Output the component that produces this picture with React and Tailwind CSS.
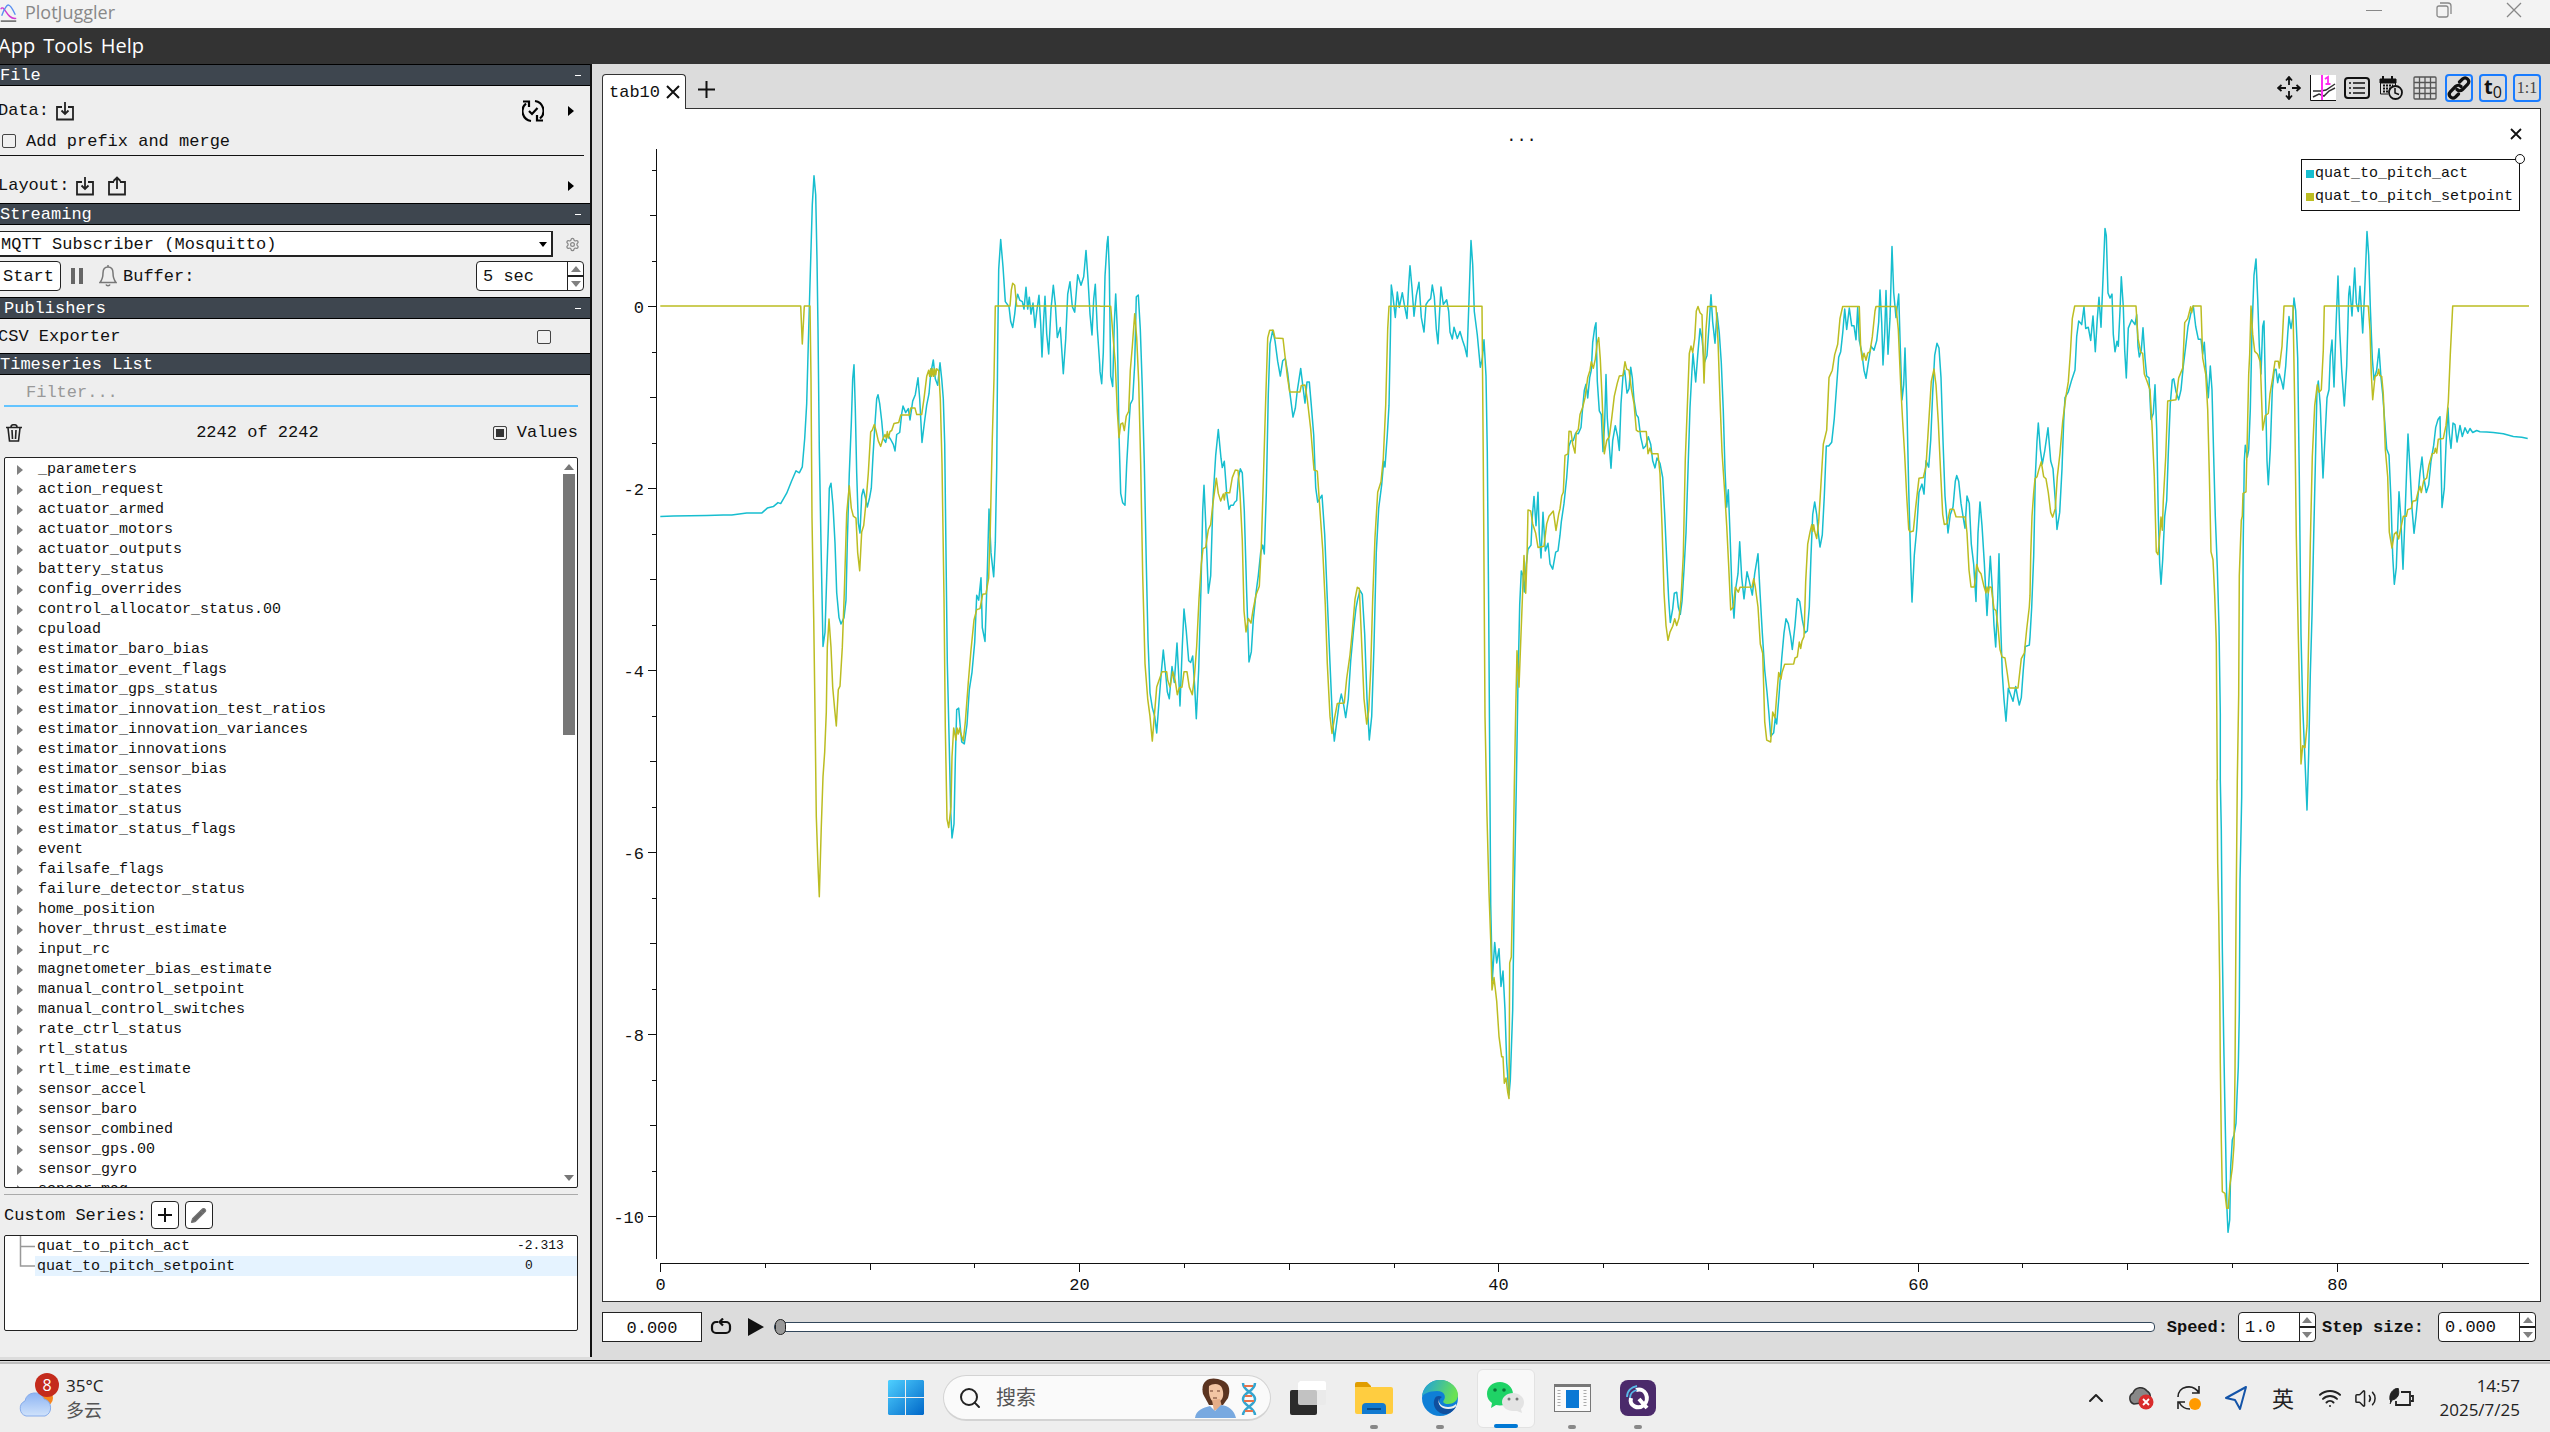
import React, { useState } from 'react';
import { Search, Settings, Wifi, Volume2, Pencil, ChevronUp } from 'lucide-react';

const MONO = "font-['Liberation_Mono','Noto_Sans_CJK_SC',monospace]";
const SANS = "font-['Open_Sans','Noto_Sans_CJK_SC',sans-serif]";

const TOPICS = [
  '_parameters', 'action_request', 'actuator_armed', 'actuator_motors', 'actuator_outputs',
  'battery_status', 'config_overrides', 'control_allocator_status.00', 'cpuload',
  'estimator_baro_bias', 'estimator_event_flags', 'estimator_gps_status',
  'estimator_innovation_test_ratios', 'estimator_innovation_variances', 'estimator_innovations',
  'estimator_sensor_bias', 'estimator_states', 'estimator_status', 'estimator_status_flags',
  'event', 'failsafe_flags', 'failure_detector_status', 'home_position', 'hover_thrust_estimate',
  'input_rc', 'magnetometer_bias_estimate', 'manual_control_setpoint', 'manual_control_switches',
  'rate_ctrl_status', 'rtl_status', 'rtl_time_estimate', 'sensor_accel', 'sensor_baro',
  'sensor_combined', 'sensor_gps.00', 'sensor_gyro', 'sensor_mag',
];

// Samples are stored per block, as integers on the grid of that block
const GRIDS = {
  a: { x: 640, y: 130, sx: 3, sy: 2.01 },
  b: { x: 1100, y: 200, sx: 3, sy: 1.704 },
  c: { x: 1560, y: 200, sx: 3, sy: 2.703 },
  d: { x: 2030, y: 200, sx: 3, sy: 2.529 },
  e: { x: 2190, y: 780, sx: 3, sy: 3 },
};

const PITCH_ACT = [
  ['a', '61,777 100,776 200,775 250,774 275,774 320,770 365,770 382,760 400,757 414,749 422,751 440,730 455,705 468,685 478,689 487,677 494,620 500,550 505,430 509,330 513,240 517,150 522,92 527,130 531,260 534,400 538,640 543,830 549,1038 555,1010 560,900 565,800 568,720 573,710 579,755 585,830 590,930 597,980 603,993 612,980 618,945 622,830 628,690 634,590 638,500 642,472 646,560 650,690 655,790 660,810 665,735 670,722 676,738 682,758 689,738 694,720 699,655 705,590 710,540 714,532 719,550 725,585 730,620 737,628 742,612 752,622 760,632 765,645 770,612 779,608 785,570 789,555 797,568 805,560 810,583 818,545 826,532 834,498 839,540 846,628 853,590 860,553 867,530 872,490 880,462 886,500 893,513 900,468 905,500 910,540 914,630 918,850 922,1070 928,1240 932,1370 936,1423 942,1395 946,1270 950,1165 956,1162 961,1200 965,1230 973,1234 981,1195 988,1125 996,1090 1004,1030 1010,935 1016,945 1023,900 1027,1000 1035,1028 1041,910 1047,762 1053,850 1061,898 1066,830 1070,680 1073,430 1076,280 1082,220 1089,275 1096,345 1107,355 1112,385 1118,397 1124,370 1128,345 1133,330 1139,342 1147,345 1152,360 1158,316 1163,360 1168,336 1173,370 1179,348 1185,397 1190,365 1197,332 1202,390 1206,456 1211,380 1215,334 1220,410 1226,450 1233,360 1240,312 1246,350 1252,417 1261,397 1270,490 1277,420 1283,330 1290,305 1297,355 1304,366 1313,291 1323,312 1331,295 1338,242 1344,300 1350,370 1356,412 1361,340 1366,310 1372,400 1379,470'],
  ['b', '0,292 5,313 10,260 15,130 21,75 24,62 28,120 32,300 38,318 43,210 47,160 52,220 57,400 62,500 68,516 75,520 80,450 86,390 91,348 98,340 104,280 109,165 115,162 121,220 127,320 133,450 139,620 144,750 150,840 157,865 164,880 170,908 177,855 184,805 190,767 196,800 202,838 208,850 216,795 223,822 231,755 236,810 240,862 247,760 252,697 259,735 266,785 272,788 278,777 284,830 289,884 296,800 303,660 308,530 312,486 317,550 325,670 332,640 339,510 347,435 355,391 363,440 367,456 373,445 380,500 387,527 392,520 400,520 404,515 410,512 415,475 421,458 427,465 433,530 440,670 447,787 454,770 460,715 468,670 475,640 482,600 488,588 493,603 499,500 505,330 510,245 518,222 525,240 533,275 541,300 548,274 556,270 563,295 570,330 579,370 586,355 592,325 602,287 608,315 615,346 621,310 628,310 634,350 641,400 647,490 653,515 666,503 674,570 682,680 690,790 697,880 703,922 710,890 717,860 724,842 730,857 737,882 745,850 752,785 761,730 768,695 773,680 780,665 787,672 794,740 801,850 808,920 815,880 822,760 829,600 836,525 845,485 851,445 855,455 862,400 867,350 871,240 874,145 879,165 886,200 892,157 898,183 907,158 913,178 921,202 926,145 930,112 936,150 942,198 949,163 957,140 964,200 972,225 978,178 985,172 992,168 997,145 1003,165 1009,220 1014,245 1018,200 1023,148 1030,178 1040,170 1046,190 1050,225 1057,237 1062,217 1072,236 1080,224 1088,240 1094,250 1101,267 1107,170 1113,69 1118,110 1123,190 1132,230 1141,285 1147,270 1152,238 1158,300 1162,430 1166,700 1169,950 1172,1200 1177,1330 1184,1265 1190,1300 1197,1276 1203,1340 1209,1314 1215,1380 1220,1470 1227,1525 1231,1500 1238,1380 1243,1180 1249,1000 1254,820 1259,690 1264,632 1269,640 1273,668 1279,620 1284,595 1293,588 1297,540 1302,505 1308,555 1314,498 1318,570 1323,610 1329,532 1336,598 1344,585 1350,620 1358,629 1367,600 1374,598'],
  ['c', '0,906 4,870 12,820 20,750 27,665 33,650 40,650 47,630 55,632 63,615 68,560 73,515 78,498 83,535 89,480 94,460 98,385 104,345 108,332 112,490 118,570 124,580 129,680 134,600 138,472 142,590 148,665 153,725 158,650 166,610 173,640 178,677 183,550 189,475 194,460 201,522 207,510 212,452 217,480 222,540 229,580 235,588 242,640 250,672 257,665 265,640 272,660 278,705 285,724 291,697 300,712 308,750 314,850 320,970 326,1080 331,1142 338,1105 343,1063 350,1060 355,1100 361,1120 366,1085 372,1000 378,900 384,730 390,560 396,460 399,415 407,492 413,420 420,348 426,375 433,440 441,420 448,330 453,256 458,330 465,387 471,305 478,360 484,440 490,570 495,730 500,830 505,783 510,900 516,1060 522,1130 527,1050 534,1010 539,924 545,1020 552,1078 561,1005 568,1030 577,1068 584,1010 594,956 600,1060 607,1170 614,1270 621,1330 627,1390 632,1450 641,1440 646,1400 650,1416 657,1340 665,1240 672,1170 678,1132 685,1145 692,1180 697,1215 705,1150 712,1077 719,1085 727,1135 735,1170 742,1165 748,1100 753,960 758,850 764,816 770,850 775,900 780,938 787,905 793,800 799,665 806,665 815,655 823,590 830,500 836,425 842,410 848,360 854,295 860,350 868,292 875,340 882,340 888,378 893,290 898,380 905,410 912,460 918,482 925,440 933,395 942,406 950,380 956,330 960,243 965,330 969,446 974,360 978,245 984,417 990,320 996,126 1001,250 1008,318 1016,254 1021,400 1026,540 1031,500 1035,400 1041,570 1046,780 1052,980 1056,1087 1063,960 1070,890 1077,790 1086,768 1092,795 1098,705 1106,722 1112,650 1118,520 1124,420 1131,387 1137,400 1143,480 1149,650 1155,800 1164,900 1171,850 1179,830 1186,760 1190,745 1196,760 1203,820 1210,860 1215,887 1221,800 1228,820 1234,930 1241,985 1248,1085 1254,900 1260,816 1266,880 1273,980 1281,1123 1286,1040 1291,963 1297,1050 1302,1150 1307,1208 1313,1080 1317,956 1322,1150 1327,1280 1332,1350 1338,1409 1345,1320 1352,1338 1359,1355 1367,1315 1373,1345 1378,1365 1384,1345 1390,1270 1396,1207 1408,1203'],
  ['d', '0,1105 5,1030 11,900 16,700 21,610 25,564 31,630 37,668 44,635 54,576 62,660 69,680 76,760 81,833 89,790 96,680 101,560 105,500 115,485 125,455 135,430 140,345 146,306 155,315 162,270 167,325 175,322 182,355 189,293 196,384 202,300 207,246 213,322 219,200 225,72 229,90 234,235 240,248 246,238 250,340 255,384 261,357 265,370 270,280 274,194 280,270 284,380 289,450 295,324 305,303 315,315 320,290 324,370 328,397 334,380 339,323 345,400 350,445 357,450 363,555 370,540 375,467 380,580 385,800 389,920 393,972 398,910 404,800 410,760 415,640 421,515 427,455 431,452 438,485 446,505 453,480 460,420 467,370 474,320 483,285 490,268 497,320 505,352 513,352 518,390 523,360 528,430 535,500 541,420 546,480 551,650 556,800 562,930 567,1080 571,1300'],
  ['e', '91,0 94,150 97,500 101,780 104,950 107,1100 109,1200 111,1290 114,1357 119,1320 122,1160 127,1080 132,1065 138,1030 141,950 145,860 148,700 150,300 152,200 155,50'],
  ['d', '637,1200 640,850 643,660 646,620 652,650 656,632 661,530 666,330 672,190 678,149 683,250 688,370 693,440 698,320 702,306 706,460 711,660 715,720 721,630 727,480 733,430 738,428 743,462 748,440 755,460 760,478 767,420 773,340 777,295 783,325 788,300 792,248 797,280 803,400 808,700 813,1100 818,1280 824,1400 831,1543 836,1400 841,1200 846,1050 851,850 857,630 861,480 865,458 871,520 879,703 885,600 891,500 897,480 901,395 906,354 912,473 918,320 924,192 929,330 935,430 943,521 950,420 956,240 959,218 966,293 974,172 979,260 985,282 990,218 998,336 1004,230 1011,80 1016,140 1021,270 1027,400 1032,455 1040,430 1047,376 1053,450 1058,490 1064,560 1070,630 1077,645 1083,760 1088,900 1093,972 1099,930 1103,830 1107,738 1112,800 1119,934 1125,800 1130,680 1134,592 1140,680 1146,780 1152,843 1158,800 1165,740 1170,690 1176,650 1181,700 1189,740 1196,720 1203,660 1211,620 1217,575 1224,555 1230,548 1236,778 1243,730 1248,620 1254,526 1258,590 1263,628 1269,564 1275,568 1281,612 1290,570 1297,598 1305,576 1313,590 1320,578 1328,588 1340,583 1350,586 1370,587 1390,588 1420,591 1450,598 1475,600 1493,603'],
];

const PITCH_SETPOINT = [
  ['a', '61,354 482,354 487,430 493,354 510,354 513,500 516,780 521,980 525,1170 529,1380 534,1480 538,1541 544,1400 549,1300 554,1250 559,1170 562,1040 567,983 573,1040 578,1120 584,1165 589,1198 595,1125 600,1118 607,1040 613,930 620,770 628,715 634,760 640,776 648,780 653,850 659,886 665,808 671,795 677,755 685,690 692,607 697,603 703,592 708,604 715,625 722,636 728,622 735,612 739,619 742,606 745,619 750,606 755,604 762,590 776,588 782,573 808,573 812,559 825,559 830,572 845,572 852,540 860,495 866,483 869,495 872,480 875,495 878,480 881,495 884,480 887,492 890,480 896,484 901,540 906,670 912,940 916,1200 921,1385 926,1402 933,1360 936,1260 941,1202 948,1226 951,1202 955,1214 959,1202 961,1210 970,1228 976,1190 985,1110 993,1045 1002,985 1010,964 1020,962 1028,933 1038,932 1046,900 1051,800 1057,620 1062,500 1066,354 1110,354 1114,322 1118,308 1124,312 1130,354 1380,354'],
  ['b', '0,181 32,181 38,225 46,280 52,360 57,405 62,382 68,380 73,393 79,368 86,360 91,290 97,250 104,194 110,235 116,310 122,450 128,640 135,790 143,850 150,880 157,922 163,880 170,830 178,817 186,804 200,804 203,818 210,830 218,804 226,820 232,843 238,831 246,830 252,804 261,804 268,830 277,843 283,815 290,760 297,680 304,620 309,594 317,592 325,562 332,553 338,520 344,495 349,474 355,500 362,513 370,501 373,511 376,499 389,499 397,473 406,460 414,461 420,500 427,580 432,700 438,736 445,713 453,721 459,699 468,673 478,658 484,590 490,480 497,340 503,235 509,222 520,222 525,235 549,236 556,270 562,300 569,327 600,327 604,316 615,315 622,340 632,390 642,460 652,462 660,530 668,595 676,690 682,790 690,880 696,909 703,885 712,858 733,857 740,815 750,775 757,735 765,680 772,660 778,662 784,740 792,850 800,893 806,870 812,800 818,680 825,575 833,498 843,480 850,440 857,350 863,220 867,181 1146,181 1150,450 1155,880 1161,1050 1167,1180 1172,1260 1176,1346 1182,1325 1190,1365 1197,1425 1205,1460 1209,1460 1213,1505 1218,1496 1223,1520 1227,1531 1229,1300 1234,1290 1239,1150 1243,1000 1247,870 1251,768 1257,830 1263,740 1268,665 1272,606 1277,670 1281,610 1284,528 1292,530 1298,552 1307,568 1314,592 1332,590 1340,552 1347,539 1360,530 1368,563 1376,535'],
  ['c', '0,835 5,800 10,790 15,690 24,686 27,625 33,626 38,660 45,684 49,628 55,620 60,580 68,560 75,535 83,480 90,460 94,437 100,455 106,430 112,385 116,372 121,430 126,530 133,686 140,650 148,640 155,590 163,530 172,495 178,476 189,474 195,437 200,457 207,460 214,510 222,550 229,622 235,626 259,626 264,686 270,670 275,686 294,686 300,740 306,880 312,1060 318,1150 324,1190 330,1168 338,1152 344,1132 350,1150 357,1130 363,1080 370,960 376,700 382,560 388,415 393,395 398,412 404,375 409,300 414,288 420,305 426,310 432,495 438,350 443,288 468,288 474,380 480,540 486,680 494,790 500,880 506,990 512,1108 520,1100 526,1047 535,1060 540,1047 576,1046 581,1024 586,1046 594,1100 601,1200 608,1225 614,1410 620,1460 632,1465 638,1384 645,1400 650,1340 656,1277 663,1295 666,1277 674,1255 701,1254 705,1238 712,1235 718,1195 722,1212 726,1192 732,1180 737,1030 743,930 750,898 755,878 758,896 761,878 764,896 770,915 776,870 782,780 790,660 800,622 807,480 817,460 824,418 833,390 840,320 848,288 898,288 902,400 907,433 912,414 918,433 923,414 930,410 937,370 945,300 948,288 1008,288 1015,350 1022,500 1028,600 1034,690 1040,800 1046,890 1050,897 1060,895 1067,830 1077,752 1090,750 1098,720 1105,620 1114,490 1122,457 1128,500 1135,600 1142,740 1148,850 1153,877 1161,875 1170,836 1181,836 1188,856 1216,857 1221,900 1227,1000 1233,1046 1243,1046 1250,985 1256,1002 1263,1010 1272,1045 1278,1062 1281,1046 1285,1062 1288,1046 1294,1047 1302,1105 1308,1110 1314,1155 1320,1215 1326,1235 1335,1238 1342,1280 1348,1319 1374,1319 1384,1240 1393,1225 1400,1160 1408,1100'],
  ['d', '0,1000 2,900 6,800 11,740 15,705 21,700 26,683 34,662 41,700 48,705 55,740 62,790 68,802 76,780 82,700 90,640 98,560 107,500 115,460 121,390 127,300 134,268 318,268 324,350 332,385 338,388 343,440 352,460 360,480 366,570 373,700 379,890 384,897 390,840 393,802 397,835 400,760 407,650 413,508 438,505 446,450 458,425 464,310 473,300 482,270 485,285 489,268 513,268 518,400 527,440 533,530 538,690 543,890 549,910 554,1000 559,1120 562,1467'],
  ['e', '81,0 83,250 86,400 89,600 91,850 94,1080 97,1235 105,1240 110,1285 115,1285 119,1220 127,1165 132,1095 135,880 138,420 140,200 142,0'],
  ['d', '626,1250 628,950 634,810 637,800 639,742 648,738 652,600 656,440 659,390 663,268 668,340 674,383 683,390 691,410 698,582 706,545 715,540 720,490 728,450 735,408 745,408 748,425 756,370 762,268 789,268 794,520 799,850 805,1100 810,1290 813,1426 818,1380 825,1385 831,1330 836,1100 841,870 847,650 854,520 862,467 867,486 874,480 880,380 883,268 1015,268 1020,330 1024,440 1028,505 1035,447 1042,443 1046,428 1049,444 1055,446 1060,490 1066,630 1073,700 1078,840 1086,880 1093,845 1099,840 1106,857 1110,840 1120,800 1129,800 1133,783 1144,780 1148,762 1158,760 1163,742 1170,724 1174,740 1181,710 1190,703 1197,670 1206,642 1213,640 1216,628 1220,640 1225,605 1240,603 1248,570 1255,510 1261,390 1268,268 1497,268'],
];

const toPolyline = (blocks) =>
  blocks
    .flatMap(([grid, samples]) => {
      const g = GRIDS[grid];
      return samples.split(' ').map((pair) => {
        const [x, y] = pair.split(',').map(Number);
        return `${(g.x + x / g.sx).toFixed(1)},${(g.y + y / g.sy).toFixed(1)}`;
      });
    })
    .join(' ');

const timeToX = (t) => Math.round(660 + t * 20.96) + 0.5;
const valueToY = (v) => Math.round(306 - v * 91) + 0.5;

const range = (from, to, step) => {
  const out = [];
  for (let v = from; v <= to; v += step) out.push(v);
  return out;
};

const PlotCanvas = () => (
  <svg
    viewBox="603 109 1937 1192"
    preserveAspectRatio="none"
    className="block w-full h-full"
    role="img"
    aria-label="quat_to_pitch_act and quat_to_pitch_setpoint over time"
  >
    <g stroke="#111" strokeWidth="1" shapeRendering="crispEdges">
      <line x1="656.5" y1="149" x2="656.5" y2="1259" />
      <line x1="660" y1="1263.5" x2="2529" y2="1263.5" />
      {range(-10, 1.5, 0.5).map((v) => {
        const len = v % 2 === 0 ? 8 : v % 1 === 0 ? 6 : 4;
        return <line key={v} x1={656 - len} x2="656" y1={valueToY(v)} y2={valueToY(v)} />;
      })}
      {range(0, 85, 5).map((t) => {
        const len = t % 20 === 0 ? 8 : t % 10 === 0 ? 6 : 4;
        return <line key={t} x1={timeToX(t)} x2={timeToX(t)} y1="1264" y2={1264 + len} />;
      })}
    </g>
    <g className={`${MONO} text-[17px]`} fill="#111">
      {range(-10, 0, 2).map((v) => (
        <text key={v} x="644" y={valueToY(v) + 6} textAnchor="end">{v}</text>
      ))}
      {range(0, 80, 20).map((t) => (
        <text key={t} x={timeToX(t)} y="1290" textAnchor="middle">{t}</text>
      ))}
    </g>
    <g fill="none" strokeWidth="1.5" strokeLinejoin="round">
      <polyline points={toPolyline(PITCH_ACT)} stroke="#17becf" />
      <polyline points={toPolyline(PITCH_SETPOINT)} stroke="#bcbd22" />
    </g>
  </svg>
);

const SectionHeader = ({ title, collapsible = true, indent = false }) => (
  <div className="flex h-[22px] shrink-0 items-center justify-between border-y border-black bg-[#3e464f] pr-1.5 text-white">
    <h2 className={indent ? 'pl-1 pt-0.5' : 'pt-0.5'}>{title}</h2>
    {collapsible && (
      <button aria-label={`Collapse ${title}`} className="flex h-4 w-3 items-center justify-center">
        <span className="h-px w-1.5 bg-white" />
      </button>
    )}
  </div>
);

const BoxArrow = ({ up = false }) => (
  <svg width="20" height="20" viewBox="0 0 20 20" fill="none" stroke="#222" strokeWidth="1.8">
    <path d="M7 6H2v12.5h16V6h-5" />
    {up ? <path d="M10 13V2M6.5 5L10 1.5 13.5 5" /> : <path d="M10 1v12M6.5 9.5L10 13l3.5-3.5" />}
  </svg>
);

const Arrow = ({ color = '#000' }) => (
  <svg width="6" height="10" viewBox="0 0 6 10">
    <path d="M0 0l6 5-6 5z" fill={color} />
  </svg>
);

const Spinner = ({ label, value, className }) => {
  const [text, setText] = useState(value);
  return (
    <div className={`flex h-[30px] shrink-0 overflow-hidden rounded-sm border border-[#222] bg-white ${className}`}>
      <input
        aria-label={label}
        value={text}
        onChange={(e) => setText(e.target.value)}
        className="min-w-0 flex-1 bg-transparent pl-1.5 pt-0.5 outline-none"
      />
      <div className="flex w-4 flex-col border-l border-[#222]">
        <button aria-label={`${label} up`} className="flex flex-1 items-center justify-center border-b border-[#222]">
          <svg width="10" height="6" viewBox="0 0 10 6"><path d="M0 6l5-6 5 6z" fill="#808080" /></svg>
        </button>
        <button aria-label={`${label} down`} className="flex flex-1 items-center justify-center border-t border-[#222]">
          <svg width="10" height="6" viewBox="0 0 10 6"><path d="M0 0l5 6 5-6z" fill="#808080" /></svg>
        </button>
      </div>
    </div>
  );
};

const Checkbox = (props) => (
  <input
    type="checkbox"
    {...props}
    className="h-3.5 w-3.5 shrink-0 appearance-none rounded-xs border border-[#444] bg-[#f0f0f0] checked:bg-[#333] checked:shadow-[inset_0_0_0_2px_#f0f0f0]"
  />
);

const Sidebar = () => (
  <aside className="flex w-[592px] shrink-0 flex-col overflow-hidden border-r-2 border-[#111] bg-[#eee]">
    <SectionHeader title="File" />
    <div className="flex h-[47px] shrink-0 items-center pr-4 pt-0.5">
      <span className="-ml-0.5">Data:</span>
      <button aria-label="Load data" className="ml-1.5"><BoxArrow /></button>
      <button aria-label="Reload data" className="ml-auto mr-6">
        <svg width="22" height="24" viewBox="0 0 22 24" fill="none" stroke="#000" strokeWidth="2.2">
          <path d="M9 22A10 10 0 0 1 4 4.5M13 2a10 10 0 0 1 5 17.5" />
          <path d="M1 2.5h6V8M21 21.5h-6V16" />
          <path d="M7 12l3 3 5.5-6" />
        </svg>
      </button>
      <button aria-label="Recent data"><Arrow /></button>
    </div>
    <div className="mr-1.5 flex h-[23px] shrink-0 items-start border-b border-[#111]">
      <label className="flex h-4 items-center gap-2.5 pl-0.5">
        <Checkbox />
        <span className="pt-0.5">Add prefix and merge</span>
      </label>
    </div>
    <div className="flex h-[47px] shrink-0 items-center pr-4 pt-3">
      <span className="-ml-0.5">Layout:</span>
      <button aria-label="Load layout" className="ml-1.5"><BoxArrow /></button>
      <button aria-label="Save layout" className="ml-3"><BoxArrow up /></button>
      <button aria-label="Recent layouts" className="ml-auto"><Arrow /></button>
    </div>

    <SectionHeader title="Streaming" />
    <div className="flex h-[72px] shrink-0 flex-col gap-1 pt-1.5">
      <div className="flex items-center">
        <div className="relative -ml-1 h-[26px] w-[557px] border border-[#222] border-b-2 border-r-2 bg-white">
          <select aria-label="Streaming source" className="h-full w-full appearance-none bg-transparent pl-1 pt-0.5 outline-none">
            <option>MQTT Subscriber (Mosquitto)</option>
          </select>
          <svg width="8" height="5" viewBox="0 0 8 5" className="pointer-events-none absolute right-1 top-2.5">
            <path d="M0 0h8L4 5z" />
          </svg>
        </div>
        <button aria-label="Streaming settings" className="ml-3">
          <Settings size={15} color="#888" strokeWidth={2} />
        </button>
      </div>
      <div className="flex items-center pr-1.5">
        <button className="-ml-1 h-[30px] w-[65px] rounded-sm border border-[#222] bg-white pt-0.5">Start</button>
        <button aria-label="Pause" className="ml-2.5 flex gap-1">
          <span className="h-4 w-1 bg-[#666]" />
          <span className="h-4 w-1 bg-[#666]" />
        </button>
        <button aria-label="Notifications" className="ml-4">
          <svg width="18" height="22" viewBox="0 0 18 22" fill="none" stroke="#777" strokeWidth="1.5">
            <path d="M9 2c-4 0-5 3-5 6 0 5-1 7-3 9.5h16C15 15 14 13 14 8c0-3-1-6-5-6zM7 19.5c.5 1.5 3.5 1.5 4 0M9 0v2" />
          </svg>
        </button>
        <span className="ml-1.5 pt-0.5">Buffer:</span>
        <Spinner label="Buffer" value="5 sec" className="ml-auto w-[108px]" />
      </div>
    </div>

    <SectionHeader title="Publishers" indent />
    <label className="flex h-[34px] shrink-0 items-center justify-between pr-[39px] pt-0.5">
      <span className="-ml-0.5">CSV Exporter</span>
      <Checkbox />
    </label>

    <SectionHeader title="Timeseries List" collapsible={false} />
    <div className="flex min-h-0 flex-1 flex-col pl-1 pr-3 pb-[26px]">
      <input
        aria-label="Filter"
        placeholder="Filter..."
        className="h-8 shrink-0 border-b-2 border-[#63c4ff] bg-transparent pl-[22px] pt-1 outline-none placeholder:text-[#999]"
      />
      <div className="flex h-[50px] shrink-0 items-center justify-between pt-0.5">
        <button aria-label="Delete series" className="ml-0.5">
          <svg width="16" height="18" viewBox="0 0 16 18" fill="none" stroke="#222" strokeWidth="1.6">
            <path d="M0 3.5h16M5 3c0-3 6-3 6 0M2 4l1.5 13h9L14 4M6 6l.5 9M10 6l-.5 9" />
          </svg>
        </button>
        <span>2242 of 2242</span>
        <label className="flex items-center gap-2.5">
          <Checkbox defaultChecked />
          Values
        </label>
      </div>

      <div className="flex min-h-0 flex-1 rounded-xs border border-[#222] bg-white">
        <ul className="flex-1 overflow-hidden pt-0.5 text-[15px] leading-5">
          {TOPICS.map((topic) => (
            <li key={topic} className="flex h-5 items-center pl-3">
              <button aria-label={`Expand ${topic}`} className="mr-[15px]"><Arrow color="#808080" /></button>
              {topic}
            </li>
          ))}
        </ul>
        <div className="flex w-4 flex-col items-center py-1.5">
          <svg width="10" height="6" viewBox="0 0 10 6"><path d="M0 6l5-6 5 6z" fill="#777" /></svg>
          <div className="mt-1 h-[261px] w-3 bg-[#777]" />
          <svg width="10" height="6" viewBox="0 0 10 6" className="mt-auto"><path d="M0 0l5 6 5-6z" fill="#777" /></svg>
        </div>
      </div>

      <div className="mt-1.5 flex h-[41px] shrink-0 items-center gap-1.5 border-t border-[#aaa]">
        <span className="-mr-0.5 pt-0.5">Custom Series:</span>
        <button aria-label="Add custom series" className="flex h-7 w-7 items-center justify-center rounded-sm border border-[#222] bg-white">
          <svg width="14" height="14" viewBox="0 0 14 14"><path d="M7 0v14M0 7h14" stroke="#111" strokeWidth="2" /></svg>
        </button>
        <button aria-label="Edit custom series" className="flex h-7 w-7 items-center justify-center rounded-sm border border-[#222] bg-white">
          <Pencil size={17} color="#777" fill="#666" strokeWidth={1.5} />
        </button>
      </div>
      <div className="flex h-24 shrink-0 rounded-xs border border-[#222] bg-white text-[15px] leading-5">
        <svg width="30" height="32" viewBox="0 0 30 32" className="shrink-0">
          <path d="M15.5 0v30H30M15.5 10.5H30" fill="none" stroke="#999" strokeWidth="1.5" />
        </svg>
        <table className="h-10 flex-1">
          <tbody>
            <tr className="h-5">
              <td className="p-0 pl-0.5 pt-0.5 leading-[18px]">quat_to_pitch_act</td>
              <td className="w-[60px] p-0 text-[13px] leading-4">-2.313</td>
            </tr>
            <tr className="h-5 bg-[#e5f3ff]">
              <td className="p-0 pl-0.5 pt-0.5 leading-[18px]">quat_to_pitch_setpoint</td>
              <td className="w-[60px] p-0 pl-2 text-[13px] leading-4">0</td>
            </tr>
          </tbody>
        </table>
      </div>
    </div>
  </aside>
);

const ToolButton = ({ label, active = false, children }) => (
  <button
    aria-label={label}
    className={`flex h-7 w-7 items-center justify-center ${active ? 'rounded-sm border-2 border-[#1a7cff]' : ''}`}
  >
    {children}
  </button>
);

const Toolbar = () => (
  <div className="ml-auto flex gap-1.5 pt-0.5">
    <ToolButton label="Pan">
      <svg width="24" height="24" viewBox="0 0 24 24" fill="none" stroke="#111" strokeWidth="1.8">
        <path d="M12 1v8M12 15v8M1 12h8M15 12h8M9 4.5L12 1l3 3.5M9 19.5l3 3.5 3-3.5M4.5 9L1 12l3.5 3M19.5 9l3.5 3-3.5 3" />
      </svg>
    </ToolButton>
    <ToolButton label="Reference point">
      <svg width="26" height="26" viewBox="0 0 26 26" fill="none">
        <rect width="26" height="26" fill="#fff" />
        <path d="M.5 0v25.5H26" stroke="#111" />
        <path d="M3 16h8l5-1 9-6M3 22l6-3 5 2 5-5 6-3" stroke="#333" strokeWidth="1.5" />
        <path d="M12 0v25" stroke="#ff2df0" strokeWidth="2" />
        <path d="M15 4l3-2v7M15.5 9h5" stroke="#ff2df0" strokeWidth="1.8" />
      </svg>
    </ToolButton>
    <ToolButton label="Legend">
      <svg width="26" height="22" viewBox="0 0 26 22" fill="none" stroke="#111" strokeWidth="2">
        <rect x="1" y="1" width="24" height="20" rx="3" />
        <path d="M9 6h12M9 11h12M9 16h12" strokeWidth="1.6" />
        <path d="M5 6h2M5 11h2M5 16h2" strokeWidth="1.6" />
      </svg>
    </ToolButton>
    <ToolButton label="Date and time">
      <svg width="24" height="24" viewBox="0 0 24 24" fill="none" stroke="#111">
        <path d="M1 3h16v4H1z" fill="#111" />
        <path d="M4 0v4M13 0v4" strokeWidth="2" />
        <path d="M1.5 7v11H9M16.5 7v2" />
        <path d="M4 9.5h10M4 12.5h7M4 15.5h6" strokeDasharray="2 1" strokeWidth="2" />
        <circle cx="16.5" cy="16.5" r="6.5" fill="#ddd" strokeWidth="1.8" />
        <path d="M16 12v5l4 1.5" strokeWidth="1.5" />
      </svg>
    </ToolButton>
    <ToolButton label="Grid">
      <svg width="24" height="24" viewBox="0 0 24 24" fill="none" stroke="#555" strokeWidth="1.3">
        <rect x="1" y="1" width="22" height="22" rx="1" />
        <path d="M6.5 1v22M12 1v22M17.5 1v22M1 6.5h22M1 12h22M1 17.5h22" />
      </svg>
    </ToolButton>
    <ToolButton label="Link axes" active>
      <svg width="24" height="24" viewBox="0 0 24 24" fill="none" stroke="#111" strokeWidth="3.2" strokeLinecap="round">
        <path d="M10 13.5c1.5 1.5 4 1.5 5.5 0l5-5c3.5-4-1.5-8.5-5-5.5l-3 3" />
        <path d="M14 10.5c-1.5-1.5-4-1.5-5.5 0l-5 5c-3.5 4 1.5 8.5 5 5.5l3-3" />
      </svg>
    </ToolButton>
    <ToolButton label="Remove time offset" active>
      <span className={`${SANS} text-xl font-bold leading-none`}>t<sub className="text-base font-normal">0</sub></span>
    </ToolButton>
    <ToolButton label="Keep ratio" active>
      <span className="font-['Liberation_Serif',serif] text-base leading-none text-[#444]">1:1</span>
    </ToolButton>
  </div>
);

const LEGEND = [
  { name: 'quat_to_pitch_act', swatch: 'bg-[#17becf]' },
  { name: 'quat_to_pitch_setpoint', swatch: 'bg-[#bcbd22]' },
];

const Playback = () => {
  const [position, setPosition] = useState(0);
  return (
    <div className="flex h-[50px] shrink-0 items-center pr-[5px]">
      <input
        aria-label="Current time"
        defaultValue="0.000"
        className="h-[30px] w-[100px] shrink-0 border border-[#222] bg-white pt-0.5 text-center outline-none"
      />
      <button aria-label="Loop" className="ml-2 shrink-0">
        <svg width="22" height="18" viewBox="0 0 22 18" fill="none" stroke="#111" strokeWidth="2.2">
          <path d="M8 4H6a4 4 0 0 0-4 4v3a4 4 0 0 0 4 4h10a4 4 0 0 0 4-4V8a4 4 0 0 0-4-4h-5M13 .5L9.5 4 13 7.5" />
        </svg>
      </button>
      <button aria-label="Play" className="ml-4 shrink-0">
        <svg width="16" height="18" viewBox="0 0 16 18"><path d="M0 0l16 9-16 9z" fill="#111" /></svg>
      </button>
      <input
        type="range"
        aria-label="Time slider"
        min="0"
        max="100"
        value={position}
        onChange={(e) => setPosition(e.target.value)}
        className="ml-2.5 h-4 min-w-0 flex-1 appearance-none bg-transparent [&::-webkit-slider-runnable-track]:h-2.5 [&::-webkit-slider-runnable-track]:rounded-sm [&::-webkit-slider-runnable-track]:border [&::-webkit-slider-runnable-track]:border-[#33475b] [&::-webkit-slider-runnable-track]:bg-white [&::-webkit-slider-thumb]:-mt-1 [&::-webkit-slider-thumb]:h-4 [&::-webkit-slider-thumb]:w-[11px] [&::-webkit-slider-thumb]:appearance-none [&::-webkit-slider-thumb]:rounded-md [&::-webkit-slider-thumb]:border [&::-webkit-slider-thumb]:border-[#222] [&::-webkit-slider-thumb]:bg-[#999]"
      />
      <span className="ml-3 mr-2.5 pt-0.5 font-bold">Speed:</span>
      <Spinner label="Speed" value="1.0" className="w-[78px]" />
      <span className="ml-1.5 mr-3.5 pt-0.5 font-bold">Step size:</span>
      <Spinner label="Step size" value="0.000" className="w-[98px]" />
    </div>
  );
};

const PlotArea = () => (
  <main className="flex min-w-0 flex-1 flex-col bg-[#dcdcdc] pb-[5px] pl-2.5 pr-[9px] pt-2">
    <div className="flex h-9 shrink-0 items-start">
      {/* the tab covers the top border of the plot frame */}
      <div className="relative z-10 mt-0.5 flex h-[35px] w-[84px] items-center gap-1.5 rounded-t-sm border border-b-0 border-[#333] bg-white pl-1.5">
        <button className="pt-0.5">tab10</button>
        <button aria-label="Close tab">
          <svg width="14" height="14" viewBox="0 0 14 14"><path d="M1 1l12 12M13 1L1 13" stroke="#111" strokeWidth="2" /></svg>
        </button>
      </div>
      <button aria-label="Add tab" className="ml-3 mt-[9px]">
        <svg width="17" height="17" viewBox="0 0 17 17"><path d="M8.5 0v17M0 8.5h17" stroke="#111" strokeWidth="2" /></svg>
      </button>
      <Toolbar />
    </div>

    <section className="relative min-h-0 flex-1 border border-[#333] bg-white">
      <PlotCanvas />
      <h1 className="absolute left-0 right-[100px] top-[18px] text-center leading-5">...</h1>
      <button aria-label="Close plot" className="absolute right-[18px] top-[19px]">
        <svg width="12" height="12" viewBox="0 0 12 12"><path d="M1 1l10 10M11 1L1 11" stroke="#111" strokeWidth="1.8" /></svg>
      </button>
      <div className="absolute right-5 top-[50px] w-[219px] border border-[#111] bg-white py-0.5 pl-1 text-[15px]">
        {LEGEND.map((item) => (
          <div key={item.name} className="flex h-[23px] items-center">
            <span className={`mr-px h-2 w-2 ${item.swatch}`} />
            {item.name}
          </div>
        ))}
        <span className="absolute -right-1.5 -top-1.5 h-2.5 w-2.5 rounded-full border border-[#111] bg-white" />
      </div>
    </section>

    <Playback />
  </main>
);

const TaskIcon = ({ label, active = false, running = false, children }) => (
  <button
    aria-label={label}
    className={`relative flex h-[59px] w-[58px] items-center justify-center rounded-md ${active ? 'border border-[#e2e2e2] bg-[#f8f8f8]' : ''}`}
  >
    {children}
    {running && <span className="absolute -bottom-px h-1 w-2 rounded-full bg-[#888]" />}
    {active && <span className="absolute -bottom-px h-1 w-6 rounded-full bg-[#0078d4]" />}
  </button>
);

const Taskbar = () => (
  <footer className={`${SANS} grid h-[70px] shrink-0 grid-cols-[1fr_auto_1fr] items-center border-t-2 border-[#bdbdbd] bg-[#eee] text-[17px] text-[#222]`}>
    <button className="flex items-center gap-3 pl-[18px] text-left">
      <svg width="42" height="50" viewBox="0 0 42 50">
        <defs>
          <linearGradient id="cloud" x1="0" y1="0" x2="0" y2="1">
            <stop offset="0" stopColor="#8db4f3" />
            <stop offset="1" stopColor="#cfe2fb" />
          </linearGradient>
        </defs>
        <circle cx="27" cy="25" r="8" fill="#f7861d" />
        <path d="M8 43a8 8 0 0 1-1-15 10 10 0 0 1 19-2 9 9 0 0 1 1 17z" fill="url(#cloud)" stroke="#86abea" />
        <circle cx="29" cy="12" r="12" fill="#c42b1c" />
        <text x="29" y="18" fill="#fff" fontSize="16" textAnchor="middle">8</text>
      </svg>
      <span className="-ml-1.5 flex flex-col leading-6">
        <span>35°C</span>
        <span className="text-lg leading-6 text-[#555]">多云</span>
      </span>
    </button>

    <nav className="flex items-center pr-1.5">
      <TaskIcon label="Start">
        <svg width="36" height="36" viewBox="0 0 36 36">
          <defs>
            <linearGradient id="win" x1="0" y1="0" x2="1" y2="1">
              <stop offset="0" stopColor="#4fd0ff" />
              <stop offset="1" stopColor="#0067c8" />
            </linearGradient>
          </defs>
          <path d="M1 0h16v17H0V1zM18 0h17l1 1v16H18zM0 18h17v17H1l-1-1zM18 18h18v16l-1 1H18z" fill="url(#win)" />
        </svg>
      </TaskIcon>
      <label className="mx-2 flex h-[46px] w-[328px] items-center rounded-full border border-b-2 border-[#d3d3d3] bg-[#fafafa] pl-3.5 pr-3">
        <Search size={24} color="#222" strokeWidth={2} />
        <input aria-label="搜索" placeholder="搜索" className="ml-3.5 min-w-0 flex-1 bg-transparent text-xl outline-none placeholder:text-[#555]" />
        <svg width="64" height="40" viewBox="0 0 64 40">
          <path d="M9 16C6 2 16-1 24 1s14 6 10 19l-5 7H15z" fill="#5b3420" />
          <path d="M15 8c4-3 11-3 13 2s2 12-4 14-10-4-9-16z" fill="#f3c5a3" />
          <path d="M18 22l8-1 2 8-8 4z" fill="#e5ad88" />
          <path d="M1 40c1-8 8-10 15-12l5 5 6-6c8 1 13 5 15 13z" fill="#78a9e0" />
          <path d="M16 13h3M23 13h3M19 20h4" stroke="#6b3a28" strokeWidth="1.2" />
          <path d="M49 5c0 9 12 9 12 16s-12 8-12 16M61 5c0 9-12 9-12 16s12 8 12 16" fill="none" stroke="#35a5cf" strokeWidth="2.5" />
          <path d="M50 8h9M51 18h7M50 23h10M51 33h8" stroke="#e9734b" strokeWidth="2" />
        </svg>
      </label>
      <div className="flex gap-2">
        <TaskIcon label="Task view">
          <svg width="36" height="36" viewBox="0 0 36 36">
            <rect y="10" width="27" height="25" rx="2" fill="#2b2b2b" />
            <rect x="8" y="1" width="28" height="24" rx="2" fill="#e8e8e8" opacity=".8" />
            <path d="M10 1h24a2 2 0 0 1 2 2v7H8V3z" fill="#fff" />
          </svg>
        </TaskIcon>
        <TaskIcon label="File Explorer" running>
          <svg width="38" height="34" viewBox="0 0 38 34">
            <path d="M0 3a2 2 0 0 1 2-2h10l4 4v6H0z" fill="#e09d00" />
            <path d="M1 6h35a2 2 0 0 1 2 2v23a2 2 0 0 1-2 2H2a2 2 0 0 1-2-2V6z" fill="#ffcd40" />
            <path d="M7 33V26a4 4 0 0 1 4-4h16a4 4 0 0 1 4 4v7z" fill="#127ad0" />
            <path d="M12 28h14" stroke="#084b8a" strokeWidth="2" />
          </svg>
        </TaskIcon>
        <TaskIcon label="Edge" running>
          <svg width="36" height="36" viewBox="0 0 36 36">
            <defs>
              <linearGradient id="edge" x1="0" y1="0" x2="1" y2=".3">
                <stop offset="0" stopColor="#1b9de2" />
                <stop offset="1" stopColor="#6ae253" />
              </linearGradient>
            </defs>
            <circle cx="18" cy="18" r="18" fill="#0f7fd6" />
            <path d="M0 17C1 6 9 0 18 0c11 0 18 8 18 15 0 6-5 9-10 9-4 0-6-2-4-4 2-3 1-9-7-9C7 11 1 14 0 17z" fill="url(#edge)" />
            <path d="M13 18c-4 8 3 17 12 16 4-1 7-4 9-7-9 4-17 1-17-5 0-2 1-4 3-5-3-2-6-1-7 1z" fill="#104f9e" />
            <path d="M17 17c-2 6 3 10 9 10 3 0 6-1 8-3 1 2-1 3-2 4-9 3-18-1-15-11z" fill="#eee" />
          </svg>
        </TaskIcon>
        <TaskIcon label="WeChat" active>
          <svg width="38" height="32" viewBox="0 0 38 32">
            <path d="M13 0C5 0 0 5 0 12c0 4 2 7 5 9l-1 5 5-3c9 2 17-3 17-11C26 5 20 0 13 0z" fill="#1fd366" />
            <path d="M26 11c-6 0-11 4-11 9s5 9 11 9l4 0 5 2-1-4c2-2 3-4 3-7 0-5-5-9-11-9z" fill="#e3e3e3" />
            <circle cx="8" cy="8" r="1.8" fill="#0b7537" /><circle cx="17" cy="8" r="1.8" fill="#0b7537" />
            <circle cx="22" cy="17" r="1.5" fill="#777" /><circle cx="30" cy="17" r="1.5" fill="#777" />
          </svg>
        </TaskIcon>
        <TaskIcon label="Virtual machine" running>
          <svg width="37" height="28" viewBox="0 0 37 28">
            <rect x=".5" y=".5" width="36" height="27" fill="#fafafa" stroke="#777" />
            <path d="M0 0h37v3H0z" fill="#777" />
            <rect x="12" y="6" width="13" height="18" fill="#0a78d4" />
            <path d="M5 6v18M31 6v18" stroke="#aaa" strokeWidth="3" strokeDasharray="1 2" />
          </svg>
        </TaskIcon>
        <TaskIcon label="QGroundControl" running>
          <svg width="36" height="36" viewBox="0 0 36 36" fill="none">
            <rect width="36" height="36" rx="8" fill="#4b2a6b" />
            <path d="M16 10c10-3 14 9 8 15-6 5-15 1-13-7M19 19l8 9" stroke="#fff" strokeWidth="4" />
            <path d="M7 17c0-6 4-10 10-11M10 18c0-4 3-7 7-8" stroke="#59b9e8" strokeWidth="1.8" />
          </svg>
        </TaskIcon>
      </div>
    </nav>

    <div className="flex items-center justify-end pr-[30px]">
      <button aria-label="Hidden icons"><ChevronUp size={24} /></button>
      <button aria-label="Cloud sync error" className="ml-5">
        <svg width="26" height="24" viewBox="0 0 26 24">
          <path d="M6 18a6 6 0 0 1-1-11 8 8 0 0 1 14-2c4 2 4 7 2 11z" fill="#888" stroke="#333" strokeWidth="1.5" />
          <circle cx="18" cy="16" r="7.5" fill="#d92b2b" />
          <path d="M15 13l6 6M21 13l-6 6" stroke="#fff" strokeWidth="1.8" />
        </svg>
      </button>
      <button aria-label="Updates" className="ml-[22px]">
        <svg width="26" height="26" viewBox="0 0 26 26" fill="none" stroke="#222" strokeWidth="1.6">
          <path d="M2 12C2 1 17-2 23 8M23 1v7h-7M14 24C8 24 5 21 3 17M2 24v-7h7" />
          <circle cx="19" cy="19" r="6" fill="#ff9a00" stroke="none" />
        </svg>
      </button>
      <button aria-label="Location" className="ml-[22px]">
        <svg width="24" height="26" viewBox="0 0 24 26" fill="none" stroke="#1454a8" strokeWidth="2">
          <path d="M22 2L2 13l9 2 5 9z" strokeLinejoin="round" />
        </svg>
      </button>
      <button className="ml-6 text-[22px] leading-6">英</button>
      <button aria-label="Network and sound" className="ml-6 flex items-center gap-3">
        <Wifi size={24} strokeWidth={2} />
        <Volume2 size={23} strokeWidth={1.6} />
        <svg width="25" height="20" viewBox="0 0 25 20" fill="none" stroke="#222" strokeWidth="1.8">
          <path d="M12 4h9v13H7v-4M22 8h2v5h-2" />
          <path d="M1 12C0 5 4 1 9 0c2 6 0 11-6 12l-2 4" fill="#222" strokeWidth="1" />
        </svg>
      </button>
      <button className="ml-[26px] flex w-20 flex-col items-end leading-6">
        <span>14:57</span>
        <span>2025/7/25</span>
      </button>
    </div>
  </footer>
);

const App = () => (
  <div className={`${MONO} flex h-screen flex-col overflow-hidden bg-[#dcdcdc] text-[17px] leading-5 text-[#111]`}>
    <header className={SANS}>
      <div className="flex h-7 items-center bg-[#f3f3f3] pb-1 text-lg text-[#888]">
        <svg width="17" height="20" viewBox="0 0 17 22" fill="none" strokeWidth="1.5">
          <path d="M0 8c4-7 6 12 17 10" stroke="#d13bd1" />
          <path d="M1 15C7 0 9-1 16 14" stroke="#5a8ff0" />
          <path d="M0 21h17" stroke="#555" />
        </svg>
        <span className="pl-2">PlotJuggler</span>
        <div className="ml-auto flex items-center gap-[54px] pr-7 pb-1">
          <button aria-label="Minimize"><svg width="16" height="16" viewBox="0 0 16 16"><path d="M0 8.5h16" stroke="#888" /></svg></button>
          <button aria-label="Restore">
            <svg width="16" height="16" viewBox="0 0 16 16" fill="none" stroke="#888" strokeWidth="1.3">
              <rect x="1" y="4" width="11" height="11" rx="2" />
              <path d="M4 1h8a3 3 0 0 1 3 3v8" />
            </svg>
          </button>
          <button aria-label="Close"><svg width="16" height="16" viewBox="0 0 16 16"><path d="M1 1l14 14M15 1L1 15" stroke="#888" strokeWidth="1.3" /></svg></button>
        </div>
      </div>
      <nav className="flex h-9 items-center gap-2 bg-[#333] text-xl text-white">
        <button className="-ml-0.5">App</button>
        <button>Tools</button>
        <button>Help</button>
      </nav>
    </header>
    <div className="flex min-h-0 flex-1">
      <Sidebar />
      <PlotArea />
    </div>
    <div className="mt-[3px] h-px shrink-0 bg-black" />
    <div className="h-px shrink-0" />
    <Taskbar />
  </div>
);

export default App;
